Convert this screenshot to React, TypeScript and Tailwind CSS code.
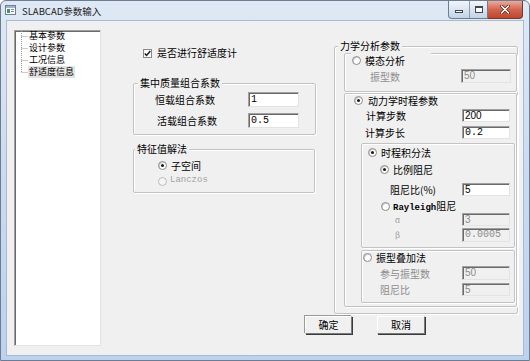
import type { ReactNode } from 'react'

const mono = "font-['Liberation_Mono',monospace]"
const sans = "font-['Liberation_Sans',sans-serif]"

function Radio({ on, off }: { on?: boolean; off?: boolean }) {
  return (
    <span
      className={`w-[9px] h-[9px] rounded-full border shrink-0 flex items-center justify-center ${off ? 'border-[#bcbcbc] bg-[#f4f4f4]' : 'border-[#8a8a8a] bg-white shadow-[inset_1px_1px_0_#cfcfcf]'}`}
    >
      {on && <span className="w-[3px] h-[3px] rounded-full bg-[#1b1b1b]" />}
    </span>
  )
}

function Field({ v, w, h, off, font }: { v: string; w: string; h: string; off?: boolean; font: string }) {
  return (
    <div
      className={`${w} ${h} ${font} border border-[#a0a0a0] border-b-[#e3e3e3] border-r-[#e3e3e3] shadow-[inset_1px_1px_0_#6a6a6a] flex items-center pl-[2px] text-[10px] leading-[12px] ${off ? 'bg-[#f0f0f0] text-[#8d8d8d]' : 'bg-white text-black'}`}
    >
      {v}
    </div>
  )
}

function Group({ title, tx, className, children }: { title: string; tx: string; className: string; children: ReactNode }) {
  return (
    <div className={`border border-[#c3c3c3] rounded-[2px] shadow-[inset_1px_1px_0_#fff,1px_1px_0_#fff] flex flex-col ${className}`}>
      <div className={`-mt-[8px] h-[14px] leading-[14px] px-[2px] bg-[#f0f0f0] w-fit ${tx}`}>{title}</div>
      {children}
    </div>
  )
}

function Panel({ className, children }: { className: string; children: ReactNode }) {
  return (
    <div className={`border border-[#c3c3c3] rounded-[2px] shadow-[inset_1px_1px_0_#fff,1px_1px_0_#fff] flex flex-col ${className}`}>
      {children}
    </div>
  )
}

const treeItems = ['基本参数', '设计参数', '工况信息', '舒适度信息']

export default function App() {
  return (
    <div className="w-[530px] h-[361px] flex flex-col border border-[#6c7c91] rounded-t-[6px] bg-linear-to-b from-[#dfe9f5] via-[#c9dbf0] to-[#bcd2ee] font-['Noto_Sans_CJK_SC',sans-serif] text-[10px] text-black overflow-hidden">
      {/* title bar */}
      <div className="h-[20px] flex items-start pl-[4px] shrink-0">
        <svg width="11" height="10" viewBox="0 0 11 10" className="mt-[4px]">
          <rect x="0.5" y="0.5" width="10" height="9" fill="#fafafa" stroke="#6f7d8f" />
          <rect x="1" y="1" width="9" height="2" fill="#9fb3cc" />
          <rect x="2" y="4" width="3" height="4" fill="#3f9a6b" />
          <rect x="6" y="4" width="3" height="1" fill="#8a8a8a" />
          <rect x="6" y="6" width="3" height="1" fill="#8a8a8a" />
        </svg>
        <span className="ml-[6px] mt-[3px] text-[9.5px] leading-[14px] text-[#1e1e1e]">SLABCAD参数输入</span>
        <div className="ml-auto mr-[6px] flex h-[18px]">
          <div className="flex border border-t-0 border-[#6e7c8f] rounded-bl-[4px] bg-linear-to-b from-[#f1f5fb] via-[#dbe5f2] to-[#c3d2e6]">
            <div className="w-[20px] flex items-center justify-center pt-[4px]">
              <span className="w-[8px] h-[3px] border border-[#3d4654] bg-white" />
            </div>
            <div className="w-[18px] border-l border-[#8e9cb0] flex items-center justify-center">
              <span className="w-[8px] h-[7px] border border-[#3d4654] border-t-2 bg-white" />
            </div>
          </div>
          <div className="w-[35px] flex items-center justify-center border border-t-0 border-l-0 border-[#6b3b31] rounded-br-[4px] bg-linear-to-b from-[#eaaa9c] via-[#d2654f] to-[#c0442d]">
            <svg width="10" height="9" viewBox="0 0 10 9">
              <path d="M1.5 1 L8.5 8 M8.5 1 L1.5 8" stroke="#5a2218" strokeWidth="3" strokeLinecap="round" />
              <path d="M1.5 1 L8.5 8 M8.5 1 L1.5 8" stroke="#fff" strokeWidth="1.6" strokeLinecap="round" />
            </svg>
          </div>
        </div>
      </div>

      {/* client */}
      <div className="flex-1 px-[6px] pb-[5px] flex">
        <div className="flex-1 bg-[#f0f0f0] shadow-[0_0_0_1px_#a8bbd3] flex pl-[7px] pt-[9px]">
          {/* tree */}
          <div className="w-[87px] h-[316px] bg-white border border-[#a0a0a0] border-b-[#e3e3e3] border-r-[#e3e3e3] shadow-[inset_1px_1px_0_#6a6a6a] flex items-start">
            <svg width="8" height="48" viewBox="0 0 8 48" className="ml-[5px] -mt-px">
              <path d="M1.5 1 V42 M1.5 6.5 H8 M1.5 18.5 H8 M1.5 30.5 H8 M1.5 42.5 H8" stroke="#9a9a9a" strokeDasharray="1 1" fill="none" />
            </svg>
            <div className="flex flex-col -mt-px">
              {treeItems.map((t, i) => (
                <div
                  key={t}
                  className={`h-[12px] leading-[12px] text-[9px] px-px w-fit ${i === 3 ? 'bg-[#e4e4e4]' : ''}`}
                >
                  {t}
                </div>
              ))}
            </div>
          </div>

          <div className="ml-[32px] flex flex-col">
            <div className="flex">
              {/* middle column */}
              <div className="w-[183px] flex flex-col">
                <div className="mt-[16px] h-[14px] flex items-center pl-[10px]">
                  <span className="w-[9px] h-[9px] border border-[#8a8a8a] bg-white flex items-center justify-center">
                    <svg width="7" height="7" viewBox="0 0 7 7">
                      <path d="M0.8 3.4 L2.6 5.4 L6.3 1" stroke="#1a1a1a" strokeWidth="1.5" fill="none" />
                    </svg>
                  </span>
                  <span className="ml-[5px] leading-[14px]">是否进行舒适度计</span>
                </div>

                <Group title="集中质量组合系数" tx="ml-[4px]" className="mt-[23px] h-[52px]">
                  <div className="mt-[2px] h-[15px] flex items-center pl-[21px]">
                    <span className="w-[93px]">恒载组合系数</span>
                    <Field v="1" w="w-[51px]" h="h-[15px]" font={mono} />
                  </div>
                  <div className="mt-[6px] h-[15px] flex items-center pl-[23px]">
                    <span className="w-[91px]">活载组合系数</span>
                    <Field v="0.5" w="w-[51px]" h="h-[15px]" font={mono} />
                  </div>
                </Group>

                <Group title="特征值解法" tx="ml-[1px]" className="mt-[14px] h-[44px] w-[182px]">
                  <div className="mt-[2px] h-[14px] flex items-center pl-[24px]">
                    <Radio on />
                    <span className="ml-[4px]">子空间</span>
                  </div>
                  <div className="mt-[2px] h-[14px] flex items-center pl-[24px]">
                    <Radio off />
                    <span className={`ml-[3px] text-[9px] text-[#a3a3a3] ${mono}`}>Lanczos</span>
                  </div>
                </Group>
              </div>

              {/* right column */}
              <Group title="力学分析参数" tx="ml-[3px]" className="ml-[18px] mt-[16px] w-[184px] h-[268px]">
                <Panel className="ml-[9px] h-[39px]">
                  <div className="-mt-px ml-[6px] w-[80px] h-[15px] bg-[#f0f0f0] flex items-center pl-px">
                    <Radio />
                    <span className="ml-[4px]">模态分析</span>
                  </div>
                  <div className="mt-px h-[14px] flex items-center pl-[25px]">
                    <span className="w-[91px] text-[#8e8e8e]">振型数</span>
                    <Field v="50" w="w-[50px]" h="h-[14px]" off font={sans} />
                  </div>
                </Panel>

                <Panel className="ml-[9px] mt-px h-[214px]">
                  <div className="h-[13px] flex items-center pl-[9px]">
                    <Radio on />
                    <span className="ml-[5px]">动力学时程参数</span>
                  </div>
                  <div className="mt-[2px] h-[13px] flex items-center pl-[21px]">
                    <span className="w-[96px]">计算步数</span>
                    <Field v="200" w="w-[48px]" h="h-[13px]" font={sans} />
                  </div>
                  <div className="mt-[4px] h-[13px] flex items-center pl-[20px]">
                    <span className="w-[97px]">计算步长</span>
                    <Field v="0.2" w="w-[48px]" h="h-[13px]" font={mono} />
                  </div>

                  <Panel className="ml-[16px] mr-px mt-[4px] h-[105px]">
                    <div className="mt-px h-[14px] flex items-center pl-[6px]">
                      <Radio on />
                      <span className="ml-[4px]">时程积分法</span>
                    </div>
                    <div className="mt-[3px] h-[14px] flex items-center pl-[18px]">
                      <Radio on />
                      <span className="ml-[4px]">比例阻尼</span>
                    </div>
                    <div className="mt-[7px] h-[13px] flex items-center pl-[28px]">
                      <span className="w-[72px]">阻尼比(%)</span>
                      <Field v="5" w="w-[48px]" h="h-[13px]" font={sans} />
                    </div>
                    <div className="mt-[4px] h-[13px] flex items-center pl-[19px]">
                      <Radio />
                      <span className="ml-[3px]">
                        <span className={`text-[9px] font-bold ${mono}`}>Rayleigh</span>阻尼
                      </span>
                    </div>
                    <div className="h-[13px] flex items-center pl-[33px]">
                      <span className="w-[67px] text-[8px] text-[#9a9a9a]">α</span>
                      <Field v="3" w="w-[48px]" h="h-[13px]" off font={sans} />
                    </div>
                    <div className="mt-[2px] h-[14px] flex items-center pl-[33px]">
                      <span className="w-[67px] text-[8px] text-[#9a9a9a]">β</span>
                      <Field v="0.0005" w="w-[48px]" h="h-[14px]" off font={mono} />
                    </div>
                  </Panel>

                  <Panel className="ml-[16px] mr-px mt-[2px] h-[53px]">
                    <div className="h-[13px] flex items-center pl-px">
                      <Radio />
                      <span className="ml-[4px]">振型叠加法</span>
                    </div>
                    <div className="mt-[2px] h-[14px] flex items-center pl-[18px]">
                      <span className="w-[82px] text-[#8e8e8e]">参与振型数</span>
                      <Field v="50" w="w-[48px]" h="h-[14px]" off font={sans} />
                    </div>
                    <div className="mt-[3px] h-[13px] flex items-center pl-[18px]">
                      <span className="w-[82px] text-[#8e8e8e]">阻尼比</span>
                      <Field v="5" w="w-[48px]" h="h-[13px]" off font={sans} />
                    </div>
                  </Panel>
                </Panel>
              </Group>
            </div>

            {/* buttons */}
            <div className="mt-[2px] pl-[172px] flex">
              <button className="w-[47px] h-[18px] bg-[#f0f0f0] border border-white border-b-[#7a7a7a] border-r-[#7a7a7a] shadow-[1px_1px_0_#3a3a3a,-1px_-1px_0_#9a9a9a] text-[10px] leading-[14px]">
                确定
              </button>
              <button className="ml-[25px] w-[48px] h-[18px] bg-[#f0f0f0] border border-white border-b-[#7a7a7a] border-r-[#7a7a7a] shadow-[1px_1px_0_#3a3a3a] text-[10px] leading-[14px]">
                取消
              </button>
            </div>
          </div>
        </div>
      </div>
    </div>
  )
}
